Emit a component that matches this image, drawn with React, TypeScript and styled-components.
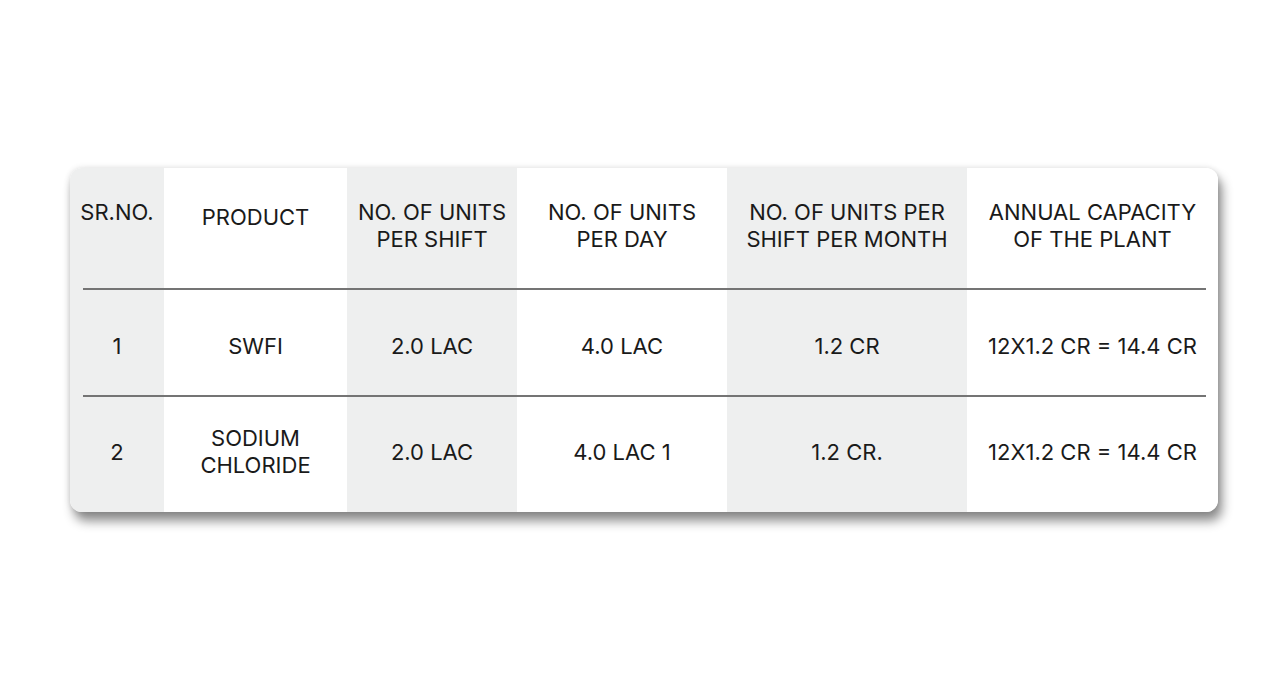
import * as React from "react";
import styled, { createGlobalStyle } from "styled-components";

const GlobalStyle = createGlobalStyle`
  html, body {
    margin: 0;
    padding: 0;
    background: #ffffff;
  }
  body {
    font-family: "Inter", "Liberation Sans", sans-serif;
    color: #1a1a1a;
  }
`;

const SPage = styled.div`
  width: 1280px;
  height: 675px;
  box-sizing: border-box;
  padding: 168px 62px 0 70px;
  background: #ffffff;
`;

const SCard = styled.div`
  display: grid;
  grid-template-columns: 94px 183px 170px 210px 240px 251px;
  grid-template-rows: 121px 107px 116px;
  border-radius: 12px;
  overflow: hidden;
  background: #ffffff;
  box-shadow: 4px 9px 11px rgba(0, 0, 0, 0.45), 0 0 6px rgba(0, 0, 0, 0.12);
`;

interface ICellStyle {
  $shaded: boolean;
  $row: number;
  $col: number;
}

const SHeadCell = styled.div<ICellStyle>`
  grid-row: ${({ $row }) => $row};
  grid-column: ${({ $col }) => $col};
  display: flex;
  flex-direction: column;
  align-items: center;
  padding-top: 31px;
  background: ${({ $shaded }) => ($shaded ? "#eeefef" : "#ffffff")};
  font-size: 22px;
  line-height: 27px;
  text-align: center;
  white-space: nowrap;
`;

const SHeadText = styled.span<{ $drop?: boolean }>`
  margin-top: ${({ $drop }) => ($drop ? "5px" : "0")};
`;

const SCell = styled.div<ICellStyle & { $shift: number }>`
  grid-row: ${({ $row }) => $row};
  grid-column: ${({ $col }) => $col};
  display: flex;
  flex-direction: column;
  align-items: center;
  justify-content: center;
  padding-top: ${({ $shift }) => Math.max($shift, 0)}px;
  padding-bottom: ${({ $shift }) => Math.max(-$shift, 0)}px;
  background: ${({ $shaded }) => ($shaded ? "#eeefef" : "#ffffff")};
  font-size: 22px;
  line-height: 27px;
  text-align: center;
  white-space: nowrap;
`;

const SDivider = styled.div<{ $row: number }>`
  grid-column: 1 / -1;
  grid-row: ${({ $row }) => $row};
  align-self: start;
  height: 2px;
  margin: -1px 12px 0 13px;
  background: #747474;
  z-index: 1;
`;

const headers: string[][] = [
  ["SR.NO."],
  ["PRODUCT"],
  ["NO. OF UNITS", "PER SHIFT"],
  ["NO. OF UNITS", "PER DAY"],
  ["NO. OF UNITS PER", "SHIFT PER MONTH"],
  ["ANNUAL CAPACITY", "OF THE PLANT"],
];

const rows: string[][][] = [
  [["1"], ["SWFI"], ["2.0 LAC"], ["4.0 LAC"], ["1.2 CR"], ["12X1.2 CR = 14.4 CR"]],
  [["2"], ["SODIUM", "CHLORIDE"], ["2.0 LAC"], ["4.0 LAC 1"], ["1.2 CR."], ["12X1.2 CR = 14.4 CR"]],
];

// vertical nudge per body row, matches the uneven centring of the source
const rowShift = [7, -4];

const App = () => {
  return (
    <>
      <GlobalStyle />
      <SPage>
        <SCard>
          {headers.map((lines, i) => (
            <SHeadCell key={`h${i}`} $shaded={i % 2 === 0} $row={1} $col={i + 1}>
              {lines.map((line, j) => (
                <SHeadText key={j} $drop={i === 1}>
                  {line}
                </SHeadText>
              ))}
            </SHeadCell>
          ))}
          {rows.map((row, r) =>
            row.map((lines, i) => (
              <SCell
                key={`r${r}c${i}`}
                $shaded={i % 2 === 0}
                $row={r + 2}
                $col={i + 1}
                $shift={rowShift[r]}
              >
                {lines.map((line, j) => (
                  <span key={j}>{line}</span>
                ))}
              </SCell>
            ))
          )}
          <SDivider $row={2} />
          <SDivider $row={3} />
        </SCard>
      </SPage>
    </>
  );
};

export default App;
